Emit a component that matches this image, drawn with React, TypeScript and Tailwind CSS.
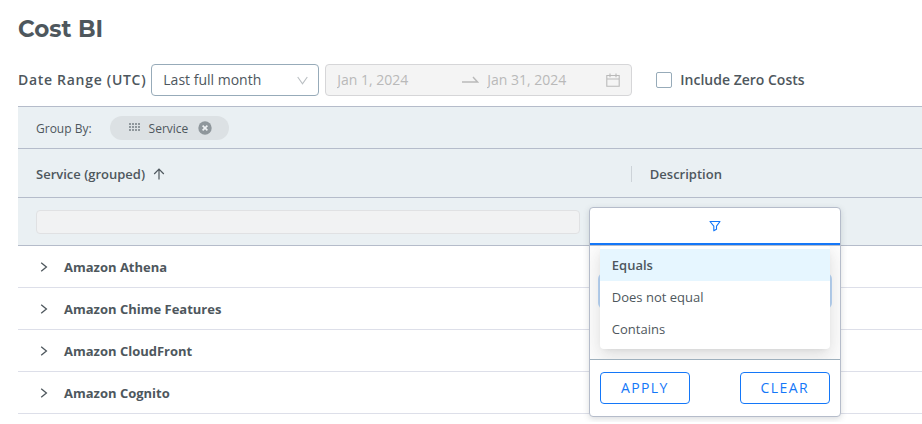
import { useState } from "react";

const services = ["Amazon Athena", "Amazon Chime Features", "Amazon CloudFront", "Amazon Cognito"];
const operators = ["Equals", "Does not equal", "Contains"];

function DragDots() {
  return (
    <svg width="12" height="9" viewBox="0 0 12 9" fill="#8f979c" aria-hidden="true">
      {[0, 3, 6, 9].map((x) =>
        [0, 3, 6].map((y) => <rect key={`${x}-${y}`} x={x} y={y} width="2" height="2" />),
      )}
    </svg>
  );
}

function FilterPopup() {
  const [operator, setOperator] = useState("Equals");
  return (
    <div className="absolute top-full -left-px z-10 w-[252px] rounded-sm border border-[#b5bcca] bg-white shadow-[0_2px_6px_rgba(70,80,90,0.2)]">
      <button
        type="button"
        aria-label="Filter"
        className="flex h-[37px] w-full items-center justify-center border-b-2 border-[#1477f8] text-[#1477f8]"
      >
        <svg width="12" height="12" viewBox="0 0 12 12" fill="none" stroke="currentColor" strokeWidth="1.1" strokeLinejoin="round" aria-hidden="true">
          <path d="M1 1.5h10L7.5 6.2v3L4.8 10.8V6.2z" />
        </svg>
      </button>
      <div className="relative h-[115px] overflow-hidden border-y border-t-[#b5bcca] border-b-[#9eb0bd] px-2.5 pt-[29px]">
        <div className="h-8 rounded-sm border border-[#91bdf0] shadow-[0_0_0_2px_#bcd8f8]" />
        <div
          role="listbox"
          aria-label="Filter operator"
          className="absolute inset-x-2.5 -top-px rounded-sm bg-white py-1 shadow-[0_3px_6px_-4px_rgba(0,0,0,0.12),0_6px_16px_rgba(0,0,0,0.08),0_9px_28px_8px_rgba(0,0,0,0.05)]"
        >
          {operators.map((name) => (
            <button
              key={name}
              type="button"
              role="option"
              aria-selected={operator === name}
              onClick={() => setOperator(name)}
              className={`block h-8 w-full px-3 pt-0.5 text-left text-[13px] ${
                operator === name ? "bg-[#e6f6ff] font-semibold" : "font-normal"
              }`}
            >
              {name}
            </button>
          ))}
        </div>
      </div>
      <div className="flex justify-between px-2.5 py-3 text-sm font-normal tracking-widest text-[#1477f8]">
        <button type="button" className="h-8 w-[90px] rounded-sm border border-[#1477f8]">APPLY</button>
        <button type="button" className="h-8 w-[90px] rounded-sm border border-[#1477f8]">CLEAR</button>
      </div>
    </div>
  );
}

export default function App() {
  return (
    <main className="bg-white pb-2 pl-[18px] font-['Open_Sans','Noto_Sans',sans-serif] text-[13px] text-[#4e575d]">
      <h1 className="pt-[13px] font-[Montserrat,Inter,sans-serif] text-[23px] leading-8 font-bold">Cost BI</h1>

      <div className="flex h-[61px] items-center pt-[19px] pb-[10px]">
        <label htmlFor="range" className="mr-[5px] text-sm font-semibold tracking-wider whitespace-nowrap">
          Date Range (UTC)
        </label>
        <div className="relative mr-1.5 w-[168px]">
          <select
            id="range"
            className="h-8 w-full appearance-none rounded-sm border border-[#97abb9] bg-white px-[11px] text-sm"
          >
            <option>Last full month</option>
          </select>
          <svg className="pointer-events-none absolute top-3 right-[11px]" width="11" height="9" viewBox="0 0 11 9" fill="none" stroke="#b9bec2" strokeWidth="1.1" aria-hidden="true">
            <path d="M.7 1 5.5 7.7 10.3 1" />
          </svg>
        </div>
        <div className="mr-6 flex h-8 w-[307px] items-center rounded-sm border border-[#d6d6d8] bg-[#f4f4f4] px-[11px] text-sm text-[#b9b9b9]">
          <input aria-label="Start date" disabled defaultValue="Jan 1, 2024" className="w-[118px]" />
          <svg className="mr-2 ml-1.5 shrink-0" width="18" height="10" viewBox="0 0 18 10" fill="none" stroke="currentColor" strokeWidth="1.4" aria-hidden="true">
            <path d="M1 7h15.5L12 2" />
          </svg>
          <input aria-label="End date" disabled defaultValue="Jan 31, 2024" className="w-0 flex-1" />
          <svg className="shrink-0" width="14" height="14" viewBox="0 0 14 14" fill="none" stroke="currentColor" strokeWidth="1.1" aria-hidden="true">
            <path d="M.8 2.5h12.4v10.7H.8zM.8 6h12.4M4 .5v3.7M10 .5v3.7" />
          </svg>
        </div>
        <label className="flex items-center gap-2 text-sm font-semibold whitespace-nowrap">
          <input type="checkbox" className="size-4 appearance-none rounded-xs border border-[#97abb9] bg-white" />
          Include Zero Costs
        </label>
      </div>

      <div className="flex h-[43px] items-center border-y border-[#b5bcca] bg-[#eaf0f3] px-[18px] text-xs">
        <span className="mr-[18px] pt-0.5">Group By:</span>
        <div className="flex h-6 items-center gap-2 rounded-full bg-[#dce1e4] pr-[17px] pl-[19px]">
          <DragDots />
          <span className="pt-0.5">Service</span>
          <button type="button" aria-label="Remove Service" className="ml-0.5">
            <svg width="14" height="14" viewBox="0 0 14 14" aria-hidden="true">
              <circle cx="7" cy="7" r="6.7" fill="#8f979c" />
              <path d="M4.6 4.6l4.8 4.8M9.4 4.6 4.6 9.4" stroke="#eef1f3" strokeWidth="1.6" />
            </svg>
          </button>
        </div>
      </div>

      <table className="w-full table-fixed border-collapse text-left">
        <thead className="bg-[#eaf0f3]">
          <tr className="h-12 border-b border-[#b5bcca]">
            <th className="w-[67.9%] pt-0.5 pl-[18px] font-semibold">
              <div className="flex h-4 items-center gap-2 border-r border-[#cdd3d8]">
                <span className="pt-0.5">Service (grouped)</span>
                <svg width="12" height="12" viewBox="0 0 12 12" fill="none" stroke="currentColor" strokeWidth="1.2" aria-hidden="true">
                  <path d="M6 11.5V1.2M1.2 6 6 1.2 10.8 6" />
                </svg>
              </div>
            </th>
            <th className="pt-1 pl-[18px] font-semibold">Description</th>
          </tr>
          <tr className="h-12 border-b border-[#b5bcca]">
            <td className="px-[18px] pt-0.5">
              <div className="flex items-center gap-2.5">
                <input aria-label="Filter services" disabled className="h-6 min-w-0 flex-1 rounded-sm border border-[#e0e1e3] bg-[#f1f2f3] px-2" />
                <div className="relative -mt-[30px] h-0 w-6">
                  <FilterPopup />
                </div>
              </div>
            </td>
            <td />
          </tr>
        </thead>
        <tbody>
          {services.map((name) => (
            <tr key={name} className="h-[42px] border-b border-[#dddfe9]">
              <td colSpan={2} className="pt-0.5 pl-[22px] font-bold">
                <div className="flex items-center gap-4">
                  <button type="button" aria-label={`Expand ${name}`}>
                    <svg width="8" height="10" viewBox="0 0 8 10" fill="none" stroke="currentColor" strokeWidth="1.3" aria-hidden="true">
                      <path d="M1.2.8 6.4 5 1.2 9.2" />
                    </svg>
                  </button>
                  <span className="pt-0.5">{name}</span>
                </div>
              </td>
            </tr>
          ))}
        </tbody>
      </table>
    </main>
  );
}
